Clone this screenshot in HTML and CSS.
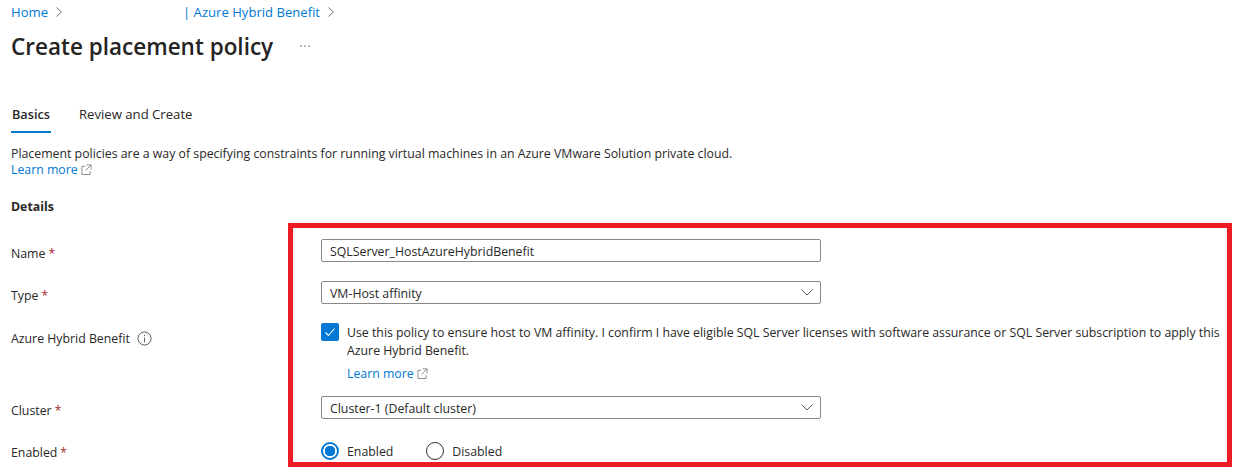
FILE: index.html
```html
<!DOCTYPE html>
<html lang="en">
<head>
<meta charset="utf-8">
<title>Create placement policy</title>
<link rel="stylesheet" href="styles.css">
</head>
<body>
<nav class="crumbs">
  <a class="link">Home</a>
  <svg class="chev" viewBox="0 0 8 12"><path d="M1.500 1.500 6.500 6l-5 4.500"/></svg>
  <a class="link crumb-second">| Azure Hybrid Benefit</a>
  <svg class="chev" viewBox="0 0 8 12"><path d="M1.500 1.500 6.500 6l-5 4.500"/></svg>
</nav>
<header class="title-row">
  <h1>Create placement policy</h1>
  <span class="more">···</span>
</header>
<div class="tabs">
  <span class="tab active">Basics</span>
  <span class="tab">Review and Create</span>
</div>
<p class="desc">Placement policies are a way of specifying constraints for running virtual machines in an Azure VMware Solution private cloud.</p>
<a class="link learn">Learn more
  <svg class="ext" viewBox="0 0 12 12"><path d="M4.500 2.500H1v9h9V8M6 1h5v5M11 1 5 7"/></svg>
</a>
<h2>Details</h2>
<form class="form">
  <div class="label">Name <span class="req">*</span></div>
  <div class="control"><div class="field">SQLServer_HostAzureHybridBenefit</div></div>

  <div class="label">Type <span class="req">*</span></div>
  <div class="control"><div class="field select">VM-Host affinity
    <svg class="down" viewBox="0 0 12 7"><path d="M.5.500 6 6 11.500.500"/></svg></div></div>

  <div class="label label-ahb">Azure Hybrid Benefit
    <svg class="info" viewBox="0 0 16 16"><circle cx="8" cy="8" r="7"/><path d="M8 7v5M8 4v1.500"/></svg>
  </div>
  <div class="control check-wrap">
    <span class="check"><svg viewBox="0 0 18 18"><path d="M4.500 9.500 7.500 12.500 13.500 5.500"/></svg></span>
    <div class="check-text">
      <p>Use this policy to ensure host to VM affinity. I confirm I have eligible SQL Server licenses with software assurance or SQL Server subscription to apply this Azure Hybrid Benefit.</p>
      <a class="link learn-inner">Learn more
        <svg class="ext" viewBox="0 0 12 12"><path d="M4.500 2.500H1v9h9V8M6 1h5v5M11 1 5 7"/></svg>
      </a>
    </div>
  </div>

  <div class="label">Cluster <span class="req">*</span></div>
  <div class="control control-last"><div class="field select">Cluster-1 (Default cluster)
    <svg class="down" viewBox="0 0 12 7"><path d="M.5.500 6 6 11.500.500"/></svg></div></div>

  <div class="label label-enabled">Enabled <span class="req">*</span></div>
  <div class="control radios">
    <span class="radio on"></span><span class="radio-label first">Enabled</span>
    <span class="radio"></span><span class="radio-label">Disabled</span>
  </div>
</form>
<div class="highlight"></div>
</body>
</html>
```
FILE: styles.css
```css
html, body { margin: 0; padding: 0; background: #fff; }
body {
  width: 1237px;
  height: 472px;
  overflow: hidden;
  position: relative;
  box-sizing: border-box;
  padding-left: 11px;
  font-family: "Open Sans", "Noto Sans", sans-serif;
  font-size: 12.320px;
  color: #292827;
}
.link { color: #0078d4; text-decoration: none; }
.crumbs { display: flex; align-items: center; height: 24px; font-size: 13.100px; }
.chev { width: 8px; height: 12px; margin-left: 7px; fill: none; stroke: #777; stroke-width: 1; }
.crumb-second { margin-left: 120px; }
.title-row { display: flex; align-items: center; height: 44px; }
h1 { margin: 0; font-size: 22.500px; font-weight: 600; color: #252423; }
.more { margin-left: 26px; color: #777; font-size: 12px; letter-spacing: 1px; }
.tabs { display: flex; margin-top: 31px; height: 34px; }
.tab { padding: 0 1px; margin-right: 27px; line-height: 30px; font-size: 13.150px; }
.tab.active { font-weight: 600; border-bottom: 2px solid #0078d4; height: 32px; line-height: 30px; font-size: 12.700px; }
.desc { margin: 13px 0 0; height: 16px; line-height: 16px; }
.learn { display: block; height: 17px; line-height: 16px; }
.ext { width: 11px; height: 11px; fill: none; stroke: #777; stroke-width: .9; vertical-align: -1px; }
h2 { margin: 20px 0 0; font-size: 12.320px; font-weight: 700; line-height: 16px; }
.form { display: grid; grid-template-columns: 310px 900px; margin-top: 24px; }
.label { box-sizing: border-box; padding-top: 3px; height: 26px; line-height: 23px; display: flex; align-items: center; gap: 3px; }
.label-ahb { padding-top: 4px; height: 27px; }
.label-enabled { padding-top: 0; height: 21px; }
.req { color: #a4262c; font-size: 12px; }
.control { margin-bottom: 19px; }
.control-last { margin-bottom: 23px; }
.field {
  box-sizing: border-box;
  width: 500px;
  height: 23px;
  border: 1px solid #8a8886;
  border-radius: 2px;
  line-height: 23px;
  padding-left: 8px;
  position: relative;
}
.down { position: absolute; right: 7px; top: 7px; width: 12px; height: 7px; fill: none; stroke: #605e5c; stroke-width: 1; }
.info { width: 15px; height: 15px; margin-left: 4px; fill: none; stroke: #555; stroke-width: 1; }
.check-wrap { display: flex; gap: 8px; margin-bottom: 13px; }
.check { flex: none; width: 18px; height: 18px; background: #0078d4; border-radius: 2px; }
.check svg { display: block; fill: none; stroke: #fff; stroke-width: 1.100; }
.check-text { width: 880px; padding-top: 1px; }
.check-text p { margin: 0; line-height: 18px; }
.learn-inner { display: block; margin-top: 5px; line-height: 18px; }
.radios { display: flex; align-items: center; height: 18px; margin-bottom: 0; }
.radio { box-sizing: border-box; width: 18px; height: 18px; border: 1px solid #323130; border-radius: 50%; }
.radio.on { border: 2px solid #0078d4; background: radial-gradient(circle, #0078d4 0 5px, #fff 5.500px); }
.radio-label { margin-left: 8px; }
.radio-label.first { margin-right: 33px; }
.highlight {
  position: absolute;
  left: 288px;
  top: 223px;
  width: 944px;
  height: 244px;
  box-sizing: border-box;
  border: 5px solid #ed1c24;
}
```
